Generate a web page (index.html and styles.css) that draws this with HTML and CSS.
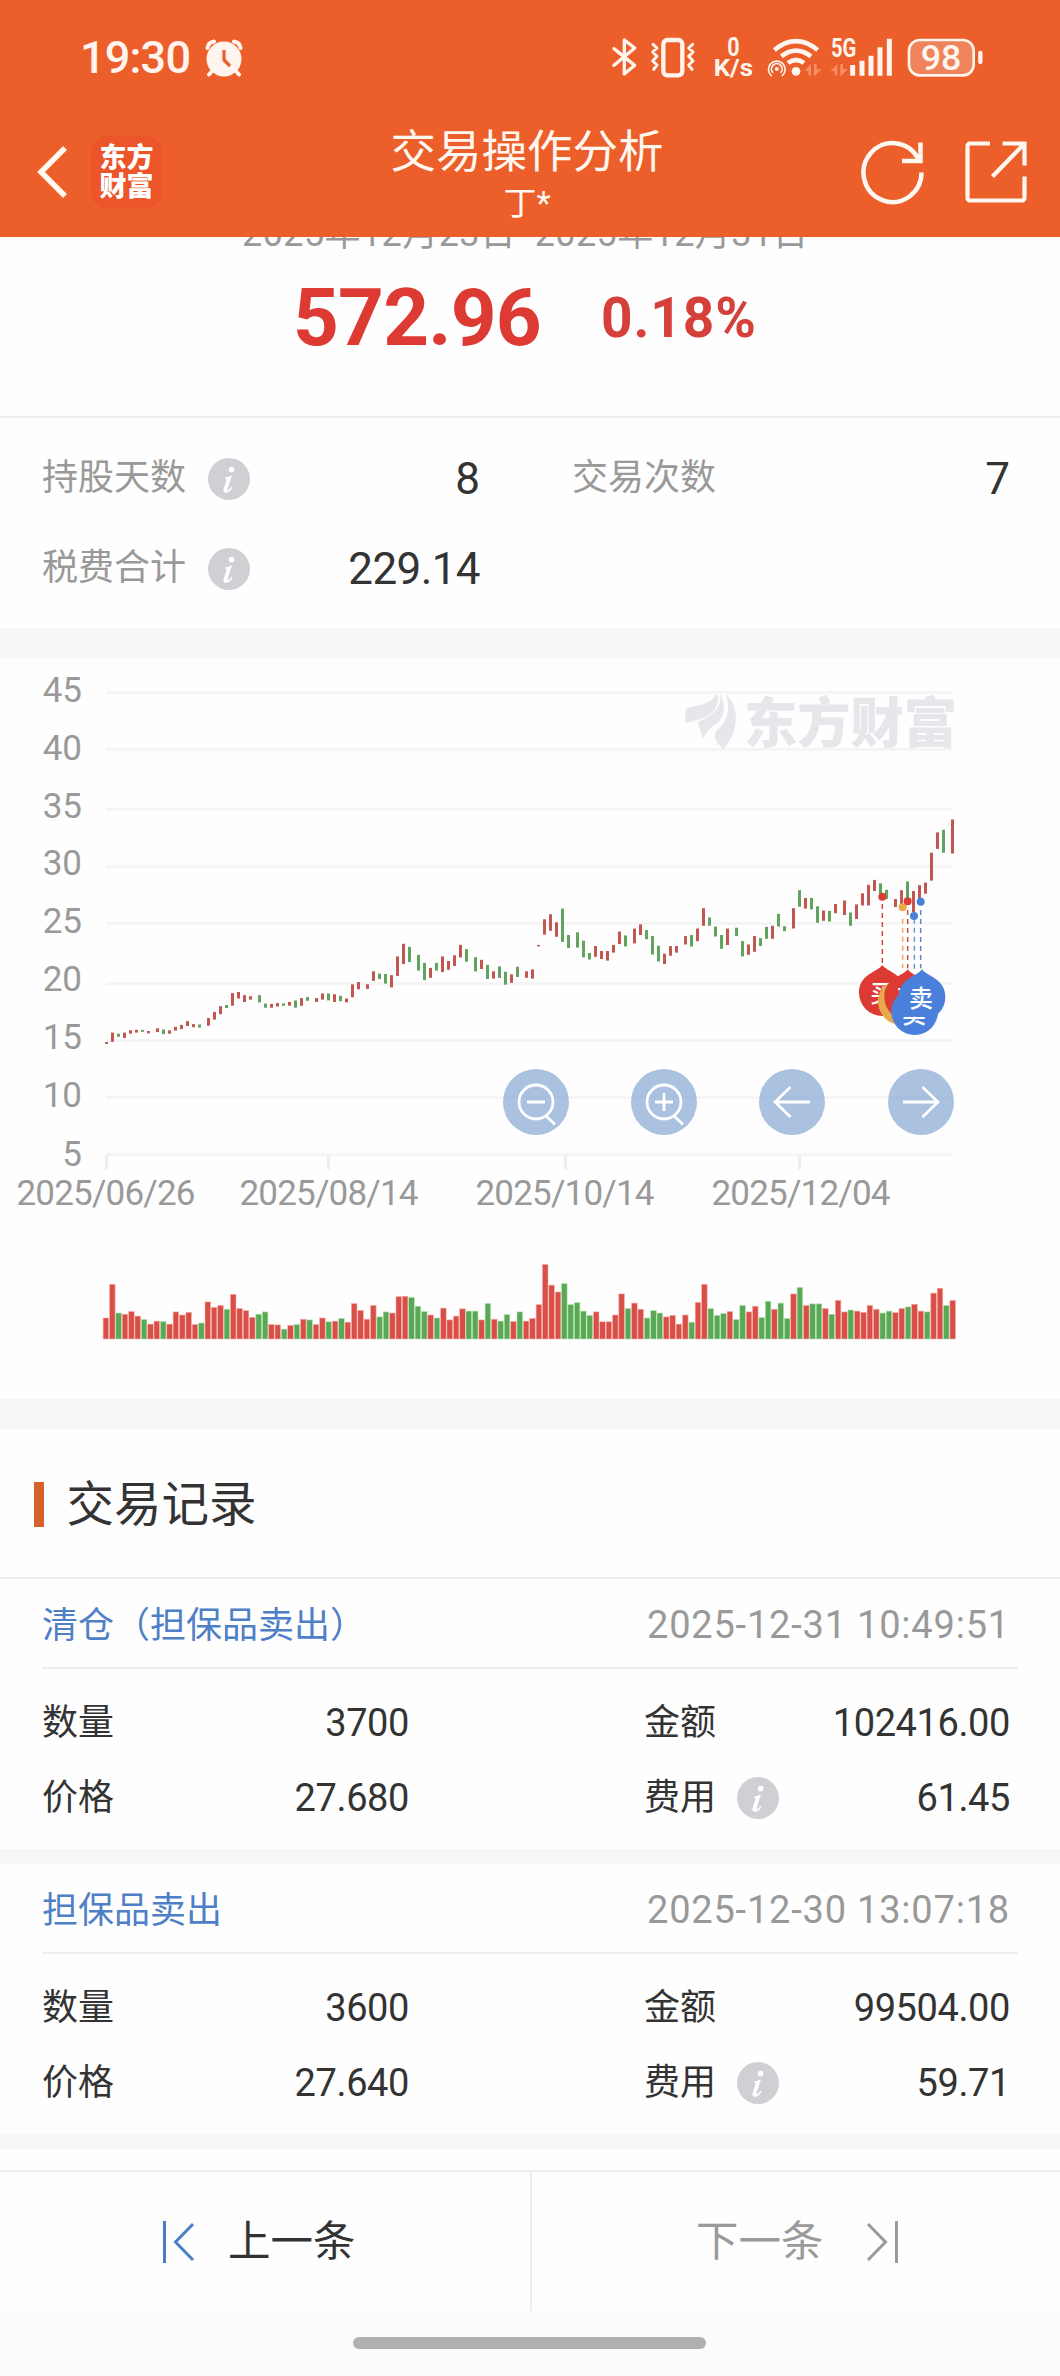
FILE: index.html
```html
<!DOCTYPE html>
<html lang="zh-CN">
<head>
<meta charset="utf-8">
<title>交易操作分析</title>
<link rel="stylesheet" href="styles.css">
</head>
<body>
<svg class="defs" width="0" height="0" aria-hidden="true">
  <symbol id="info" viewBox="0 0 42 42">
    <circle cx="21" cy="21" r="21" fill="#cfd0d4"/>
    <circle cx="23.6" cy="11.6" r="2.9" fill="#fff"/>
    <path d="M17.2 19.6c2.2-.5 4-1.200 6-2.200l.6.5-4.200 13.200c-.3 1.100.2 1.500 1 .9 1.200-.8 2-1.800 2.900-3.200l1 .6c-1.700 3.200-3.900 5.400-6.500 5.400-2.300 0-3.100-1.500-2.400-3.700l2.700-8.500c.4-1.400 0-1.900-1.200-1.900z" fill="#fff"/>
  </symbol>
</svg>

<header class="header">
  <div class="status">
    <div class="status-left">
      <span class="clock">19:30</span>
      <svg class="alarm" width="38" height="38" viewBox="0 0 38 38">
        <g fill="none" stroke="#fff5ee" stroke-width="4" stroke-linecap="round"><path d="M2.500 9C3 5.500 5.500 3 9 2.500M29 2.500c3.500.5 6 3 6.500 6.500M8 31l-4 4.500M30 31l4 4.500"/></g>
        <circle cx="19" cy="20" r="17.500" fill="#fff5ee"/>
        <path d="M19 11v10l6 6" fill="none" stroke="#ec5f2b" stroke-width="3.200"/>
      </svg>
    </div>
    <svg class="status-icons" width="400" height="65" viewBox="0 0 1200 195">
      <g fill="none" stroke="#fff5ee" stroke-linecap="round" stroke-linejoin="round">
        <path stroke-width="10" d="M42 71l62 50-31 26V45l31 24-62 52"/>
        <rect x="190" y="45" width="57" height="106" rx="12" stroke-width="13"/>
        <path stroke-width="9" d="M159 58l12 11-13 12 13 13-13 14 13 12-10 13M278 58l-12 11 13 12-13 13 13 14-13 12 10 13"/>
        <path stroke-width="14" stroke-linecap="butt" d="M523 75Q588 22 653 75M544 94Q588 60 633 94M564 114Q588 96 612 114"/>
        <path stroke-width="5" d="M514 152a25 25 0 1 1 33 0M518 142a16 16 0 1 1 25 0"/>
        <path stroke-width="15" stroke-linecap="butt" d="M758 152V120M786 152V107M813 152V92M840 152V67M868 152V41"/>
        <rect x="927" y="45" width="194" height="106" rx="32" stroke-width="8" fill="#ee835c"/>
        <path stroke-width="13" d="M1141 84v27"/>
      </g>
      <g fill="#fff5ee">
        <circle cx="588" cy="139" r="13"/><circle cx="530.500" cy="132" r="6"/>
        <g fill="#f68d67">
          <path d="M613 138l20-21v34h-8v-13zM642 117h8v16h14l-20 20h-2zM692 138l20-21v34h-8v-13zM721 117h8v16h14l-20 20h-2z"/>
        </g>
        <text class="st" x="382" y="93" font-size="76" textLength="37" lengthAdjust="spacingAndGlyphs">0</text>
        <text class="st" x="341" y="152" font-size="74" textLength="118" lengthAdjust="spacingAndGlyphs">K/s</text>
        <text class="st" x="693" y="97" font-size="76" textLength="76" lengthAdjust="spacingAndGlyphs">5G</text>
        <text class="st md" x="962" y="134" font-size="104" textLength="122" lengthAdjust="spacingAndGlyphs">98</text>
      </g>
    </svg>
  </div>
  <div class="nav">
    <div class="nav-left">
      <svg width="32" height="54" viewBox="0 0 32 54"><path d="M29 3L5 27l24 24" fill="none" stroke="#fff8f0" stroke-width="5.500"/></svg>
      <div class="brand">东方<br>财富</div>
    </div>
    <div class="titles"><h1>交易操作分析</h1><p>丁*</p></div>
    <div class="nav-right">
      <svg width="64" height="66" viewBox="0 0 64 66" fill="none" stroke="#fff8f0" stroke-width="4.500"><path d="M60.500 33.500A29 29.500 0 1 1 57 19.500"/><path d="M59.500 3.500v18.500H41"/></svg>
      <svg width="62" height="62" viewBox="0 0 62 62" fill="none" stroke="#fff8f0" stroke-width="4.200"><path d="M25 2.500H5a2.500 2.500 0 0 0-2.500 2.500v52A2.500 2.500 0 0 0 5 59.500h52a2.500 2.500 0 0 0 2.500-2.500V35.500M37.500 2.500h22v22M59 3L27.500 35.500"/></svg>
    </div>
  </div>
</header>

<section class="hero">
  <p class="range">2025年12月23日<span>-</span>2025年12月31日</p>
  <div class="profit"><strong>572.96</strong><b>0.18%</b></div>
</section>

<section class="stats">
  <div class="stat"><span class="label">持股天数</span><svg class="info"><use href="#info"/></svg><span class="value">8</span></div>
  <div class="stat"><span class="label">交易次数</span><span class="value">7</span></div>
  <div class="stat"><span class="label">税费合计</span><svg class="info"><use href="#info"/></svg><span class="value wide">229.14</span></div>
</section>

<div class="band"></div>

<svg class="chart" width="1060" height="741" viewBox="0 658 1060 741">
  <g stroke="#f5f5f5" stroke-width="3"><path d="M106 692.500H953M106 749.500H953M106 809.500H953M106 866.500H953M106 923.500H953M106 983.500H953M106 1040.500H953M106 1097.500H953M106 1154.500H953"/></g>
  <path stroke="#eee" stroke-width="3" d="M106.500 1155v14.500M328.500 1155v14.500M565.500 1155v14.500M799.500 1155v14.500"/>
  <g fill="#e6e6eb">
    <path d="M686 723c-1-8-2-14 2-15 10-3 14-2 22-7 6-4 7-8 7.500-7 2 10-3 18-10 22-8 4-14 5-21.500 7z"/>
    <path d="M703 739l-5-16c0-2 3-2 8-5 10-6 16-13 14-24 6 10 5 22-3 29-6 4-10 8-14 16z"/>
    <path d="M726 694c8 8 11 18 9.500 30-1 10-6 17-12 25.500-5-5-9-10-8.500-15 1-6 6-6 10-14 4-7 4-16 1-26.500z"/>
    <text class="mark" x="744" y="743" textLength="213" lengthAdjust="spacingAndGlyphs">东方财富</text>
  </g>
  <g class="axis" text-anchor="end">
    <text x="82" y="701.500">45</text><text x="82" y="760">40</text><text x="82" y="818">35</text><text x="82" y="875">30</text><text x="82" y="933">25</text><text x="82" y="991">20</text><text x="82" y="1049">15</text><text x="82" y="1107">10</text><text x="82" y="1165.500">5</text>
  </g>
  <g class="axis">
    <text x="16.500" y="1205" textLength="179">2025/06/26</text><text x="239.500" y="1205" textLength="179">2025/08/14</text><text x="475.500" y="1205" textLength="179">2025/10/14</text><text x="711.500" y="1205" textLength="179">2025/12/04</text>
  </g>
  <g id="candles"></g>
  <g id="volumes"></g>
  <g transform="translate(820 840) scale(.33333)">
    <g stroke-width="4.500" stroke-dasharray="15 12">
      <path d="M187 192V375" stroke="#cf4a43"/><path d="M248 236V385" stroke="#e8b05a"/><path d="M263 210V385" stroke="#cf4a43"/><path d="M283 236V395" stroke="#6d98d0"/><path d="M302 210V385" stroke="#5a88d2"/>
    </g>
    <circle cx="187" cy="170" r="12" fill="#dc3a32"/><circle cx="248" cy="202" r="12" fill="#e9a84a"/><circle cx="263" cy="184" r="12" fill="#dc3a32"/><circle cx="282" cy="228" r="12" fill="#4a80d8"/><circle cx="302" cy="185" r="12" fill="#4a80d8"/>
    <defs>
      <path id="pin" d="M0-83C14-62 70-56 70 0A70 70 0 0 1-70 0C-70-56-14-62 0-83z"/>
      <clipPath id="legs"><rect x="230" y="530" width="110" height="50"/></clipPath>
    </defs>
    <use href="#pin" x="187" y="458" fill="#dc3a32"/><text class="pt" x="187" y="487">买</text>
    <use href="#pin" x="244" y="485" fill="#e9a84a"/>
    <use href="#pin" x="263" y="471" fill="#dc3a32"/><text class="pt" x="263" y="500">买</text>
    <use href="#pin" x="284" y="515" fill="#4a80dc"/>
    <use href="#pin" x="306" y="471" fill="#4a80dc"/><text class="pt" x="303" y="501">卖</text>
    <text class="pt" x="282" y="549" clip-path="url(#legs)">卖</text>
  </g>
  <g fill="#7da0d0" fill-opacity=".65"><circle cx="536" cy="1102" r="33"/><circle cx="664" cy="1102" r="33"/><circle cx="792" cy="1102" r="33"/><circle cx="921" cy="1102" r="33"/></g>
  <g fill="none" stroke="#fff" stroke-width="2.800">
    <circle cx="536" cy="1102" r="17"/><path d="M527 1102h18M546 1116l9 8.500"/>
    <circle cx="664" cy="1102" r="17"/><path d="M655 1102h18M664 1093v18M674 1116l9 8.500"/>
    <path d="M810 1102H775M790.500 1087l-15.500 15 15.500 15M903 1102h35M922.500 1087l15.500 15-15.500 15"/>
  </g>
</svg>

<div class="band"></div>

<section class="records">
  <h2>交易记录</h2>
  <article class="record">
    <div class="head"><span class="type">清仓（担保品卖出）</span><time>2025-12-31 10:49:51</time></div>
    <dl>
      <dt>数量</dt><dd>3700</dd><dt>金额</dt><dd>102416.00</dd>
      <dt>价格</dt><dd>27.680</dd><dt>费用<svg class="info"><use href="#info"/></svg></dt><dd>61.45</dd>
    </dl>
  </article>
  <article class="record">
    <div class="head"><span class="type">担保品卖出</span><time>2025-12-30 13:07:18</time></div>
    <dl>
      <dt>数量</dt><dd>3600</dd><dt>金额</dt><dd>99504.00</dd>
      <dt>价格</dt><dd>27.640</dd><dt>费用<svg class="info"><use href="#info"/></svg></dt><dd>59.71</dd>
    </dl>
  </article>
</section>

<nav class="pager">
  <div class="prev"><svg width="32" height="42" viewBox="0 0 32 42" fill="none" stroke="#4a7ec8" stroke-width="3"><path d="M1.500 0v42M30 3L12.500 21 30 39"/></svg><span>上一条</span></div>
  <div class="next"><span>下一条</span><svg width="32" height="42" viewBox="0 0 32 42" fill="none" stroke="#9a9a9a" stroke-width="3"><path d="M30.500 0v42M2 3l17.500 18L2 39"/></svg></div>
</nav>
<footer class="gesture"><i></i></footer>
<script src="chart.js"></script>
</body>
</html>
```
FILE: styles.css
```css
* { box-sizing: border-box; margin: 0; padding: 0; }
body {
  width: 1060px;
  height: 2376px;
  overflow: hidden;
  background: #fefefe;
  color: #333;
  font-family: Roboto, "Noto Sans CJK SC", sans-serif;
  display: flex;
  flex-direction: column;
}
body > * { flex: none; }
.defs { position: absolute; }
svg { display: block; flex: none; }

.header { height: 237px; background: #ec5f2b; color: #fff8f0; position: relative; z-index: 1; }
.status { height: 113px; display: flex; justify-content: space-between; padding: 25px 60px 0 80px; }
.status-left { display: flex; height: 66px; align-items: center; gap: 15px; color: #fff5ee; }
.clock { font-size: 45px; font-weight: 500; line-height: 60px; letter-spacing: -.8px; }
.st { font-weight: 700; }
.md { font-weight: 500; }
.nav { height: 124px; display: grid; grid-template-columns: 300px 1fr 300px; }
.nav-left { display: flex; align-items: center; padding-left: 36px; gap: 23px; height: 117px; }
.brand {
  width: 71px; height: 72px; border-radius: 16px; background: #eb5529;
  color: #fff; font-size: 27px; font-weight: 900; line-height: 29px; text-align: center; padding-top: 8px;
}
.titles { text-align: center; padding-right: 6px; }
.titles h1 { font-size: 45.500px; font-weight: 400; line-height: 60px; margin-top: 9.500px; }
.titles p { font-size: 33px; line-height: 40px; padding-top: 1px; }
.nav-right { display: flex; align-items: center; justify-content: flex-end; gap: 40px; padding-right: 33px; height: 117px; }

.hero { height: 181px; border-bottom: 2px solid #eee; }
.range { margin-top: -23px; font-size: 36px; line-height: 40px; letter-spacing: .4px; text-align: center; color: #999; padding-right: 9px; }
.range span { padding: 0 4px; }
.profit { display: flex; align-items: center; color: #dc3a32; padding-left: 293px; margin-top: 17px; line-height: 94px; }
.profit strong { font-size: 80px; letter-spacing: -.8px; width: 308px; }
.profit b { font-size: 55px; letter-spacing: .9px; color: #d5403a; }

.stats { height: 210px; padding: 16px 50px 0 42px; display: grid; grid-template-columns: 438px 438px; column-gap: 92px; grid-auto-rows: 90px; }
.stat { display: flex; align-items: center; }
.label { font-size: 36px; line-height: 44px; color: #999; padding-bottom: 3px; }
.stat .info { margin-left: 22px; }
.info { width: 42px; height: 42px; }
.value { margin-left: auto; font-size: 44px; line-height: 50px; color: #333; }
.wide { letter-spacing: -.6px; }
.band { height: 30px; background: #f7f7f7; }

.axis { font-size: 35px; fill: #999; }
.mark { font: 900 54px "Noto Sans CJK SC", sans-serif; }
.pt { font-size: 72px; font-weight: 500; fill: #fff; text-anchor: middle; }
.up { fill: #c25650; }
.down { fill: #61a45d; }
.vup { fill: #d94f48; stroke: #f5b3ae; stroke-width: .6px; }
.vdown { fill: #5aa856; stroke: #b2e5ae; stroke-width: .6px; }

h2 { height: 150px; border-bottom: 2px solid #eee; padding: 3px 0 0 34px; display: flex; align-items: center; gap: 23px; font-size: 47.500px; line-height: 60px; font-weight: 400; }
h2::before { content: ""; width: 9.500px; height: 45px; background: #d5622b; }
.record { height: 285px; border-bottom: 15px solid #f7f7f7; padding: 0 42px; }
.head { height: 90px; border-bottom: 2px solid #eee; display: flex; justify-content: space-between; align-items: center; line-height: 50px; padding: 4px 8px 0 0; }
.type { font-size: 36px; color: #4f7fc6; padding-top: 1px; }
time { font-size: 38px; color: #999; letter-spacing: .8px; }
dl { display: grid; grid-template-columns: 120px 247px 235px 140px 226px; grid-auto-rows: 75px; padding-top: 16px; }
dl > * { display: flex; align-items: center; line-height: 50px; }
dt { font-size: 36px; }
dt:nth-of-type(even) { grid-column: 4; }
dt .info { margin-left: 21px; }
dd { font-size: 38px; justify-content: flex-end; letter-spacing: -.4px; }

.pager { margin-top: 21px; height: 141px; border-top: 2px solid #eee; display: grid; grid-template-columns: 532px 1fr; font-size: 42.500px; line-height: 60px; }
.pager div { display: flex; align-items: center; }
.prev { border-right: 2px solid #eee; padding-left: 163px; gap: 33px; }
.next { color: #9a9a9a; padding-left: 164px; gap: 42px; }
.gesture { height: 66px; background: #fbfbfb; display: flex; justify-content: center; padding: 26px 1px 0 0; }
.gesture i { width: 353px; height: 12px; border-radius: 6px; background: #b0b0b0; }
```
FILE: chart.js
```js
// Each entry: candle colour, candle top, candle bottom, volume top. 2.6133 units per pixel.
const rows = `r685 690 1406,r660 684 1318,g663 671 1393,r660 674 1396,r654 663 1389,r653 660 1401,g653 658 1410,r656 662 1422,r649 659 1414,g652 664 1415,r654 663 1422,r645 655 1390,r640 651 1398,r630 643 1391,r638 646 1423,g639 647 1419,r622 642 1364,r606 626 1378,r591 612 1373,g588 596 1383,r557 590 1344,r554 571 1381,r562 580 1387,r565 574 1404,g562 581 1396,g584 595 1390,r585 595 1423,r583 592 1424,g584 590 1435,r580 590 1425,g576 595 1423,r570 590 1409,g567 577 1411,r570 580 1423,r558 574 1406,g558 576 1416,r560 580 1414,g564 578 1407,r571 581 1417,r534 568 1368,r528 547 1386,r534 546 1409,r500 525 1373,g506 520 1403,g507 532 1390,r510 542 1393,r461 512 1350,r428 481 1349,g436 476 1352,g457 498 1375,g478 523 1389,r491 517 1398,g478 498 1406,r461 502 1380,r473 496 1411,r458 486 1401,r431 464 1382,g442 475 1388,g463 500 1388,r470 494 1411,g483 520 1368,r500 519 1409,g487 517 1414,g501 535 1397,r508 530 1415,g488 515 1390,r500 517 1414,r495 519 1407,r431 435 1371,r364 404 1266,r351 394 1320,r372 410 1338,g336 423 1316,g405 439 1371,g398 438 1366,g420 464 1388,g452 469 1399,r434 462 1390,r447 468 1416,r447 472 1416,r431 451 1398,r396 429 1343,g406 435 1381,r388 427 1367,r377 405 1383,g392 416 1406,g408 456 1387,g433 474 1393,r454 481 1403,r434 459 1399,r434 451 1422,r408 430 1398,g405 435 1417,r388 421 1365,r335 381 1318,g359 381 1381,g383 409 1399,g405 441 1394,r388 431 1389,g386 408 1410,g421 461 1373,r430 457 1390,r408 449 1375,g413 434 1405,g384 415 1362,r381 415 1383,g350 383 1367,g382 395 1407,r335 388 1343,g288 331 1326,r308 336 1373,g308 338 1369,g330 373 1369,r341 368 1381,g342 370 1396,r324 348 1360,r315 353 1390,g346 381 1385,r325 363 1388,r296 328 1391,r274 328 1373,r261 290 1383,g270 300 1393,g287 311 1388,r311 332 1392,r288 325 1381,g265 312 1377,r290 345 1370,r275 310 1388,r268 297 1390,r190 263 1341,r137 180 1328,g130 190 1373,r103 192 1360`.split(',');
const toY = v => 780 + v / 2.6133;
const rect = (cls, x, w, top, bottom) =>
  `<rect class="${cls}" x="${x}" y="${top.toFixed(1)}" width="${w}" height="${(bottom - top).toFixed(1)}"/>`;
let candles = '', volumes = '';
rows.forEach((row, i) => {
  const [top, bottom, vol] = row.slice(1).split(' ').map(Number);
  const up = row[0] === 'r';
  const x = 106.5 + 3 * Math.floor(i * 2.12 + 0.13);
  candles += rect(up ? 'up' : 'down', (x - 1.5).toFixed(1), 3, toY(top), toY(bottom));
  const volumeUp = up && i !== 129;
  volumes += rect(volumeUp ? 'vup' : 'vdown', (103.1 + i * 6.367).toFixed(1), 5.6, toY(vol), 1339);
});
document.getElementById('candles').innerHTML = candles;
document.getElementById('volumes').innerHTML = volumes;
```
